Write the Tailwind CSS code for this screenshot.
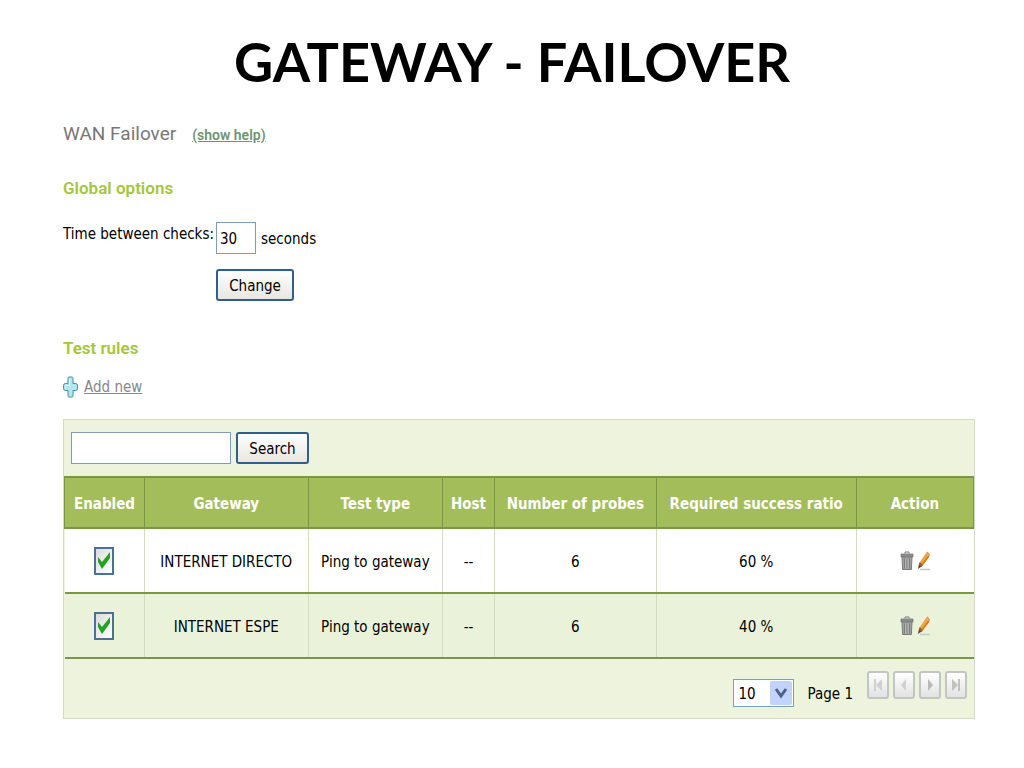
<!DOCTYPE html>
<html lang="en">
<head>
  <meta charset="UTF-8" />
  <meta name="viewport" content="width=device-width, initial-scale=1.0" />
  <title>Gateway - Failover</title>
  <script src="https://cdn.jsdelivr.net/npm/@tailwindcss/browser@4"></script>
</head>
<body class="bg-white text-black font-['DejaVu_Sans_Condensed','DejaVu_Sans',sans-serif] text-[15px] leading-5">
  <!-- shared icons -->
  <svg class="hidden">
    <symbol id="tick" viewBox="0 0 20 28">
      <path d="M4 10l4 5 8-10v6l-8 11-4-7z" fill="#22a322" />
    </symbol>
    <symbol id="trash" viewBox="0 0 14 20">
      <path d="M5 2.500V1h4v1.500" fill="none" stroke="#777" />
      <path d="M1 3h12v3H1z" fill="#8f8f8f" stroke="#777" stroke-width=".8" />
      <path d="M2 6h10l-.6 12.500H2.600z" fill="#a2a2a2" stroke="#7b7b7b" />
      <path d="M4.500 7.500v10M7 7.500v10M9.500 7.500v10" stroke="#757575" stroke-width=".8" />
      <path d="M5.700 7.500v10M8.200 7.500v10" stroke="#c4c4c4" stroke-width=".7" />
    </symbol>
    <symbol id="pencil" viewBox="0 0 14 20">
      <path d="M3 18.500h10" stroke="#c2c8cc" stroke-width="1.500" />
      <path d="M1 18l1-5.500 2.500 3z" fill="#5b4636" />
      <path d="M2 12.500L9 2l3.500 3.500-8 10.500z" fill="#f3a33c" />
      <path d="M4.500 16L12.300 5.500l-1-1L3.500 14.800z" fill="#c9772b" />
      <path d="M9 2l1.500-1.500L13 3.500l-.7 2z" fill="#e8935c" />
      <path d="M2 12.500l1-1.500 2.600 3.500L4.500 16z" fill="#8d5a3a" />
    </symbol>
  </svg>

  <h1 class="pt-6 text-center font-['Lato',sans-serif] text-[54px] leading-[76px] font-bold">GATEWAY - FAILOVER</h1>

  <main class="pl-[63px] pr-[49px] pt-5">
    <div class="flex items-baseline gap-4">
      <h2 class="text-[19px] leading-7 text-[#777] font-['Roboto',sans-serif]">WAN Failover</h2>
      <a href="#" class="text-[14px] text-[#6f946f] underline font-['Roboto',sans-serif] font-semibold">(show help)</a>
    </div>

    <h3 class="mt-6 text-[17px] leading-8 font-semibold text-[#a5c63b] font-['Roboto',sans-serif]">Global options</h3>
    <form class="mt-[18px] grid grid-cols-[153px_1fr] gap-y-[15px]" onsubmit="return false">
      <label for="interval" class="pt-[2px]">Time between checks:</label>
      <div class="flex items-center gap-[5px]">
        <input id="interval" type="text" value="30" class="h-8 w-10 border border-[#7f9db9] bg-white px-[3px] pt-[2px]" />
        <span class="pt-[2px]">seconds</span>
      </div>
      <button class="col-start-2 h-8 w-[78px] rounded-[3px] border-2 border-[#2f5f8f] bg-linear-to-b from-white to-[#e8e6df] pt-px">Change</button>
    </form>

    <h3 class="mt-[31px] text-[17px] leading-8 font-semibold text-[#a5c63b] font-['Roboto',sans-serif]">Test rules</h3>
    <a href="#" class="mt-3 flex w-fit items-center gap-[6px] text-[#888]">
      <svg class="h-[22px] w-[15px]" viewBox="0 0 15 22">
        <path d="M5 2.500q0-1.500 1-1.500h3q1 0 1 1.500v5h2.500q2 0 2 2v3q0 2-2 2H10v5q0 1.500-1 1.500H6q-1 0-1-1.500v-5H2.500q-2 0-2-2v-3q0-2 2-2H5z" fill="#b5e6f0" stroke="#3f8fa3" />
        <path d="M6.500 3v6.500H2.500" fill="none" stroke="#e9fafd" />
      </svg>
      <span class="underline">Add new</span>
    </a>

    <section class="mt-[21px] border border-[#d3dcbf] bg-[#edf3dc]">
      <form class="flex items-center gap-[5px] px-[7px] py-3" onsubmit="return false">
        <input type="text" aria-label="Search rules" class="h-8 w-40 border border-[#7f9db9] bg-white px-1" />
        <button class="h-8 w-[73px] rounded-[3px] border-2 border-[#2f5f8f] bg-linear-to-b from-white to-[#e8e6df] pt-px">Search</button>
      </form>

      <table class="w-full table-fixed border-collapse text-center">
        <colgroup>
          <col class="w-[8.8%]" />
          <col class="w-[18%]" />
          <col class="w-[14.8%]" />
          <col class="w-[5.7%]" />
          <col class="w-[17.8%]" />
          <col class="w-[22%]" />
          <col />
        </colgroup>
        <thead>
          <tr class="h-[51px] border-y-2 border-[#7a9648] bg-[#a4bd5b] text-white">
            <th class="border-x border-[#7a9648] pt-[2px]">Enabled</th>
            <th class="border-x border-[#7a9648] pt-[2px]">Gateway</th>
            <th class="border-x border-[#7a9648] pt-[2px]">Test type</th>
            <th class="border-x border-[#7a9648] pt-[2px]">Host</th>
            <th class="border-x border-[#7a9648] pt-[2px]">Number of probes</th>
            <th class="border-x border-[#7a9648] pt-[2px]">Required success ratio</th>
            <th class="border-x border-[#7a9648] pt-[2px]">Action</th>
          </tr>
        </thead>
        <tbody>
          <tr class="h-[65px] border-b-2 border-[#7a9648] bg-white">
            <td class="border-r border-r-[#d3dcbf]">
              <span class="inline-grid align-middle">
                <input type="checkbox" checked aria-label="Enable INTERNET DIRECTO" class="peer col-start-1 row-start-1 h-7 w-5 appearance-none border-2 border-[#4a7296] bg-linear-to-br from-[#dcdcdc] to-white" />
                <svg class="pointer-events-none invisible col-start-1 row-start-1 h-7 w-5 peer-checked:visible"><use href="#tick" /></svg>
              </span>
            </td>
            <td class="border-r border-r-[#d3dcbf] pt-[2px]">INTERNET DIRECTO</td>
            <td class="border-r border-r-[#d3dcbf] pt-[2px]">Ping to gateway</td>
            <td class="border-r border-r-[#d3dcbf] pt-[2px]">--</td>
            <td class="border-r border-r-[#d3dcbf] pt-[2px]">6</td>
            <td class="border-r border-r-[#d3dcbf] pt-[2px]">60 %</td>
            <td>
              <div class="flex justify-center gap-[3px]">
                <button aria-label="Delete"><svg class="h-5 w-[14px]"><use href="#trash" /></svg></button>
                <button aria-label="Edit"><svg class="h-5 w-[14px]"><use href="#pencil" /></svg></button>
              </div>
            </td>
          </tr>
          <tr class="h-[65px] border-b-2 border-[#7a9648] bg-[#eaf3da]">
            <td class="border-r border-r-[#d3dcbf]">
              <span class="inline-grid align-middle">
                <input type="checkbox" checked aria-label="Enable INTERNET ESPE" class="peer col-start-1 row-start-1 h-7 w-5 appearance-none border-2 border-[#4a7296] bg-linear-to-br from-[#dcdcdc] to-white" />
                <svg class="pointer-events-none invisible col-start-1 row-start-1 h-7 w-5 peer-checked:visible"><use href="#tick" /></svg>
              </span>
            </td>
            <td class="border-r border-r-[#d3dcbf] pt-[2px]">INTERNET ESPE</td>
            <td class="border-r border-r-[#d3dcbf] pt-[2px]">Ping to gateway</td>
            <td class="border-r border-r-[#d3dcbf] pt-[2px]">--</td>
            <td class="border-r border-r-[#d3dcbf] pt-[2px]">6</td>
            <td class="border-r border-r-[#d3dcbf] pt-[2px]">40 %</td>
            <td>
              <div class="flex justify-center gap-[3px]">
                <button aria-label="Delete"><svg class="h-5 w-[14px]"><use href="#trash" /></svg></button>
                <button aria-label="Edit"><svg class="h-5 w-[14px]"><use href="#pencil" /></svg></button>
              </div>
            </td>
          </tr>
        </tbody>
      </table>

      <div class="flex items-start justify-end gap-[14px] px-[7px] pt-3 pb-[11px]">
        <div class="mt-2 flex items-center gap-[14px]">
          <div class="grid">
            <select aria-label="Rows per page" class="col-start-1 row-start-1 h-7 w-[61px] appearance-none border border-[#7f9db9] bg-white pl-[5px] pt-[2px]">
              <option>10</option>
              <option>25</option>
              <option>50</option>
            </select>
            <svg class="pointer-events-none col-start-1 row-start-1 m-[2px] h-6 w-[22px] self-center justify-self-end" viewBox="0 0 22 24">
              <rect width="22" height="24" rx="2" fill="#c2d3fb" />
              <path d="M6 8l5 7 5-7" fill="none" stroke="#4d6185" stroke-width="3" />
            </svg>
          </div>
          <span class="pt-[2px]">Page 1</span>
        </div>
        <div class="flex gap-1">
          <button aria-label="First page" class="grid h-7 w-[22px] place-items-center rounded-[3px] border-2 border-[#c4c4c0] bg-linear-to-b from-white to-[#e2e2e2]">
            <svg class="h-3 w-2" viewBox="0 0 8 12" fill="#d0d0d0"><path d="M0 0h2v12H0zM8 0v12L2 6z" /></svg>
          </button>
          <button aria-label="Previous page" class="grid h-7 w-[22px] place-items-center rounded-[3px] border-2 border-[#c4c4c0] bg-linear-to-b from-white to-[#e2e2e2]">
            <svg class="h-3 w-2" viewBox="0 0 8 12" fill="#d0d0d0"><path d="M6 0v12L1 6z" /></svg>
          </button>
          <button aria-label="Next page" class="grid h-7 w-[22px] place-items-center rounded-[3px] border-2 border-[#c4c4c0] bg-linear-to-b from-white to-[#e2e2e2]">
            <svg class="h-3 w-2" viewBox="0 0 8 12" fill="#b8b8b8"><path d="M2 0v12l5-6z" /></svg>
          </button>
          <button aria-label="Last page" class="grid h-7 w-[22px] place-items-center rounded-[3px] border-2 border-[#c4c4c0] bg-linear-to-b from-white to-[#e2e2e2]">
            <svg class="h-3 w-2" viewBox="0 0 8 12" fill="#c0c0c0"><path d="M6 0h2v12H6zM0 0v12l6-6z" /></svg>
          </button>
        </div>
      </div>
    </section>
  </main>
</body>
</html>
